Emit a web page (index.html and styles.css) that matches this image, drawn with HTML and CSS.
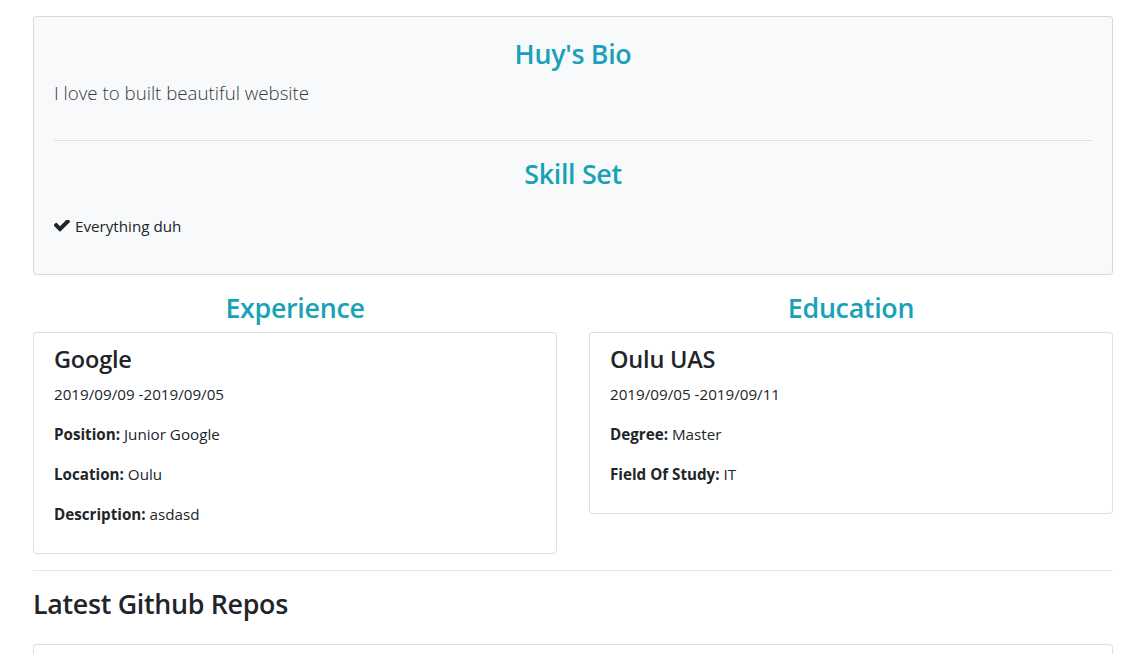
FILE: index.html
```html
<!DOCTYPE html>
<html lang="en">
<head>
<meta charset="utf-8">
<title>Huy's Profile</title>
<link rel="stylesheet" href="styles.css">
</head>
<body>
<div class="page">
  <div class="about card">
    <h3 class="title-info">Huy's Bio</h3>
    <p class="lead">I love to built beautiful website</p>
    <hr class="hr-inner">
    <h3 class="title-info">Skill Set</h3>
    <div class="skills">
      <div class="skill">
        <svg class="check" viewBox="139 430 1532 1092" aria-hidden="true"><path d="M1671 566q0 40-28 68l-724 724-136 136q-28 28-68 28t-68-28l-136-136-362-362q-28-28-28-68t28-68l136-136q28-28 68-28t68 28l294 295 656-657q28-28 68-28t68 28l136 136q28 28 28 68z"/></svg>
        <span>Everything duh</span>
      </div>
    </div>
  </div>

  <div class="creds">
    <div class="col">
      <h3 class="title-info">Experience</h3>
      <ul class="list-group">
        <li class="list-item">
          <h4>Google</h4>
          <p>2019/09/09 -2019/09/05</p>
          <p><strong>Position:</strong> Junior Google</p>
          <p><strong>Location:</strong> Oulu</p>
          <p><strong>Description:</strong> asdasd</p>
        </li>
      </ul>
    </div>
    <div class="col">
      <h3 class="title-info">Education</h3>
      <ul class="list-group">
        <li class="list-item">
          <h4>Oulu UAS</h4>
          <p>2019/09/05 -2019/09/11</p>
          <p><strong>Degree:</strong> Master</p>
          <p><strong>Field Of Study:</strong> IT</p>
        </li>
      </ul>
    </div>
  </div>

  <hr class="hr-outer">
  <h3 class="repos-title">Latest Github Repos</h3>
  <div class="repo card"></div>
</div>
</body>
</html>
```
FILE: styles.css
```css
* { box-sizing: border-box; }
html, body { margin: 0; padding: 0; }
body {
  font-family: "Segoe UI", "Open Sans", "Noto Sans", sans-serif;
  font-size: 15.2px;
  line-height: 24px;
  color: #212529;
  background: #fff;
}
.page {
  padding: 16px 20px 0 33px;
}
.card {
  border: 1px solid rgba(0,0,0,.125);
  border-radius: 4px;
  background: #fff;
}
.about {
  display: flex;
  flex-direction: column;
  background: #f8f9fa;
  padding: 20px;
  margin-bottom: 16px;
}
h3 {
  font-size: 26.8px;
  font-weight: 600;
  letter-spacing: -0.3px;
  line-height: 33px;
  margin: 0 0 8px;
}
h4 {
  font-size: 23.5px;
  font-weight: 600;
  letter-spacing: -0.2px;
  line-height: 29px;
  margin: 0 0 8px;
}
p { margin: 0 0 16px; }
strong { font-weight: 700; }
.title-info {
  color: #17a2b8;
  text-align: center;
}
.lead {
  font-size: 18.7px;
  font-weight: 300;
  line-height: 30px;
  color: #343a40;
}
.hr-inner, .hr-outer {
  border: 0;
  border-top: 1px solid rgba(0,0,0,.1);
  margin: 16px 0;
  height: 0;
}
.skills {
  display: flex;
  flex-wrap: wrap;
  margin: 0 -15px;
}
.skill {
  padding: 16px;
  display: flex;
  align-items: center;
  gap: 5px;
}
.check {
  width: 16px;
  height: 11.5px;
  fill: #212529;
  margin-left: -1px;
}
.creds {
  display: grid;
  grid-template-columns: 1fr 1fr;
  column-gap: 32px;
}
.list-group {
  list-style: none;
  margin: 0;
  padding: 0;
}
.list-item {
  border: 1px solid rgba(0,0,0,.125);
  border-radius: 4px;
  padding: 12px 20px 11px;
  background: #fff;
}
.repos-title {
  margin-bottom: 24px;
}
.repo {
  height: 80px;
  margin-bottom: 8px;
}
```
